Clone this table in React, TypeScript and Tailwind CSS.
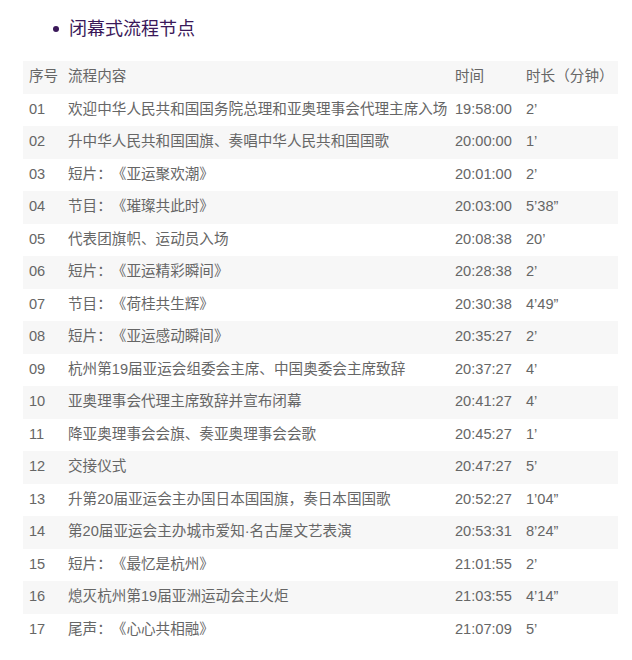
import React from 'react';

const rows: [string, string, string, string][] = [
  ['01', '欢迎中华人民共和国国务院总理和亚奥理事会代理主席入场', '19:58:00', '2’'],
  ['02', '升中华人民共和国国旗、奏唱中华人民共和国国歌', '20:00:00', '1’'],
  ['03', '短片：《亚运聚欢潮》', '20:01:00', '2’'],
  ['04', '节目：《璀璨共此时》', '20:03:00', '5’38”'],
  ['05', '代表团旗帜、运动员入场', '20:08:38', '20’'],
  ['06', '短片：《亚运精彩瞬间》', '20:28:38', '2’'],
  ['07', '节目：《荷桂共生辉》', '20:30:38', '4’49”'],
  ['08', '短片：《亚运感动瞬间》', '20:35:27', '2’'],
  ['09', '杭州第19届亚运会组委会主席、中国奥委会主席致辞', '20:37:27', '4’'],
  ['10', '亚奥理事会代理主席致辞并宣布闭幕', '20:41:27', '4’'],
  ['11', '降亚奥理事会会旗、奏亚奥理事会会歌', '20:45:27', '1’'],
  ['12', '交接仪式', '20:47:27', '5’'],
  ['13', '升第20届亚运会主办国日本国国旗，奏日本国国歌', '20:52:27', '1’04”'],
  ['14', '第20届亚运会主办城市爱知·名古屋文艺表演', '20:53:31', '8’24”'],
  ['15', '短片：《最忆是杭州》', '21:01:55', '2’'],
  ['16', '熄灭杭州第19届亚洲运动会主火炬', '21:03:55', '4’14”'],
  ['17', '尾声：《心心共相融》', '21:07:09', '5’'],
];

const font = { fontFamily: '"Liberation Sans", "Noto Sans CJK SC", sans-serif' };

const App = () => {
  return (
    <div className="min-h-screen bg-white pt-[17px] [text-spacing-trim:space-all]" style={font}>
      <div className="flex items-center pl-[53px] h-[24px]">
        <span className="w-[6px] h-[6px] rounded-full bg-[#3a1859] mr-[10px]" />
        <h2 className="text-[18px] leading-[24px] text-[#3a1859]">闭幕式流程节点</h2>
      </div>

      <table className="ml-[23px] mt-[20px] w-[595px] text-[14.6px] text-[#666] border-collapse">
        <thead>
          <tr className="bg-[#f7f7f7] h-[32.5px]">
            <th className="w-[39px] pl-[6px] text-left font-normal">序号</th>
            <th className="w-[387px] pl-[6px] text-left font-normal">流程内容</th>
            <th className="w-[71px] pl-[6px] text-left font-normal">时间</th>
            <th className="pl-[6px] text-left font-normal whitespace-nowrap">时长（分钟）</th>
          </tr>
        </thead>
        <tbody>
          {rows.map((r, i) => (
            <tr key={r[0]} className={i % 2 === 1 ? 'bg-[#f7f7f7] h-[32.5px]' : 'bg-white h-[32.5px]'}>
              <td className="pl-[6px] whitespace-nowrap">{r[0]}</td>
              <td className="pl-[6px] whitespace-nowrap">{r[1]}</td>
              <td className="pl-[6px] whitespace-nowrap">{r[2]}</td>
              <td className="pl-[6px] whitespace-nowrap">{r[3]}</td>
            </tr>
          ))}
        </tbody>
      </table>
    </div>
  );
};

export default App;
